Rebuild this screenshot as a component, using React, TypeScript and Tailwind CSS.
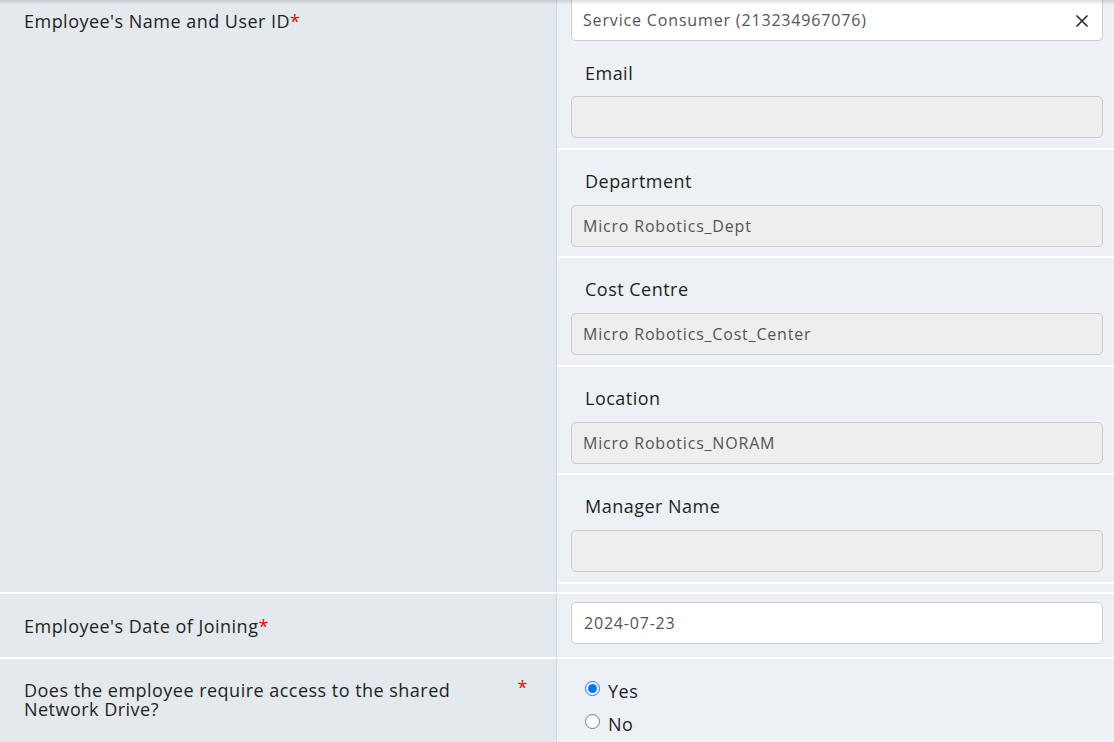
import React from "react";

const Req = () => <span className="text-[#ff0000]">*</span>;

function Section({
  label,
  value,
  pb,
}: {
  label: string;
  value?: string;
  pb: string;
}) {
  return (
    <div className={`border-b-2 border-white pl-[14px] pr-[11px] pt-[19px] ${pb}`}>
      <div className="pl-[14px] leading-[24px] text-[#1f1f1f]">{label}</div>
      <div className="mt-[12px] h-[42px] rounded-[5px] border border-[#cccccc] bg-[#eeeeee] px-[11px] flex items-center text-[16px] tracking-[0.8px] text-[#555555]">
        {value}
      </div>
    </div>
  );
}

export default function App() {
  return (
    <div className="relative w-[1114px] h-[742px] overflow-hidden bg-[#edf1f5] font-['Open_Sans','Noto_Sans',sans-serif] text-[18px] tracking-[0.48px] text-[#1f1f1f]">
      <div className="pointer-events-none absolute inset-x-0 top-0 z-10 h-[5px] bg-linear-to-b from-[rgba(0,0,0,0.13)] to-transparent" />

      {/* Row 1 */}
      <div className="flex border-b-2 border-white">
        <div className="w-[557px] shrink-0 bg-[#e4e9ed] border-r border-[#c9d7e5] pl-6 pt-[9px] leading-[24px]">
          Employee's Name and User ID<Req />
        </div>
        <div className="flex-1 pb-2">
          {/* first section */}
          <div className="border-b-2 border-white pl-[14px] pr-[11px] pb-[10px]">
            <div className="h-[41px] rounded-b-[5px] border border-t-0 border-[#cccccc] bg-white pl-[11px] pr-[14px] flex items-center justify-between text-[16px] tracking-[0.84px] text-[#555555]">
              <span>Service Consumer (213234967076)</span>
              <svg width="12" height="12" viewBox="0 0 12 12" className="mt-[1px]">
                <path d="M1 1L11 11M11 1L1 11" stroke="#2b2b2b" strokeWidth="1.7" strokeLinecap="round" />
              </svg>
            </div>
            <div className="mt-[20px] pl-[14px] leading-[24px]">Email</div>
            <div className="mt-[11px] h-[42px] rounded-[5px] border border-[#cccccc] bg-[#eeeeee]" />
          </div>
          <Section label="Department" value="Micro Robotics_Dept" pb="pb-[9px]" />
          <Section label="Cost Centre" value="Micro Robotics_Cost_Center" pb="pb-[10px]" />
          <Section label="Location" value="Micro Robotics_NORAM" pb="pb-[9px]" />
          <Section label="Manager Name" pb="pb-[10px]" />
        </div>
      </div>

      {/* Row 2 */}
      <div className="flex border-b-2 border-white">
        <div className="w-[557px] shrink-0 bg-[#e4e9ed] border-r border-[#c9d7e5] pl-6 flex items-center leading-[24px] pt-[1px]">
          <span>
            Employee's Date of Joining<Req />
          </span>
        </div>
        <div className="flex-1 pl-[14px] pr-[11px] pt-2 pb-[13px]">
          <div className="h-[42px] rounded-[5px] border border-[#cccccc] bg-white px-[12px] flex items-center text-[16px] tracking-[0.8px] text-[#555555]">
            2024-07-23
          </div>
        </div>
      </div>

      {/* Row 3 */}
      <div className="flex h-[120px]">
        <div className="w-[557px] shrink-0 bg-[#e4e9ed] border-r border-[#c9d7e5] pl-6 pr-[28px] pt-[22px] flex items-start">
          <div className="w-[470px] leading-[19px]">
            Does the employee require access to the shared Network Drive?
          </div>
          <span className="ml-auto text-[#ff0000] leading-[19px] -mt-[3px]">*</span>
        </div>
        <div className="flex-1 pl-[28px] pt-[16px]">
          <label className="flex h-[33px] items-center gap-[8px]">
            <input
              type="radio"
              name="drive"
              defaultChecked
              className="m-0 h-[15px] w-[15px] accent-[#0075ff] -mt-[6px]"
            />
            <span>Yes</span>
          </label>
          <label className="flex h-[33px] items-center gap-[8px]">
            <input
              type="radio"
              name="drive"
              className="m-0 h-[15px] w-[15px] -mt-[6px]"
            />
            <span>No</span>
          </label>
        </div>
      </div>
    </div>
  );
}
